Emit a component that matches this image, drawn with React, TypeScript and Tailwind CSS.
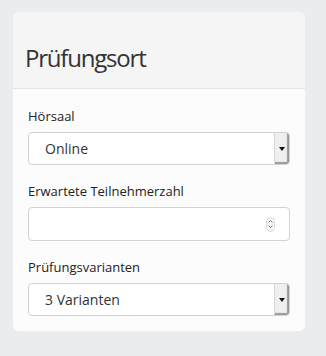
function SelectBox({ value }: { value: string }) {
  return (
    <div className="flex h-[33px] items-stretch overflow-hidden rounded-[4px] border border-[#d2d2d2] bg-white">
      <span className="flex flex-1 items-center pl-[16px] text-[14px] text-[#333]">{value}</span>
      <span className="flex w-[15px] items-center justify-center border-l border-[#d6d6d6] bg-[#efefef] shadow-[inset_-2px_-2px_1px_#9a9a9a]">
        <svg width="6" height="4" viewBox="0 0 6 4">
          <path d="M0 0h6L3 4z" fill="#111" />
        </svg>
      </span>
    </div>
  );
}

function NumberBox() {
  return (
    <div className="flex h-[34px] items-center justify-end rounded-[4px] border border-[#d2d2d2] bg-white pr-[14px]">
      <span className="flex h-[15px] w-[9px] flex-col items-center justify-center rounded-full border border-[#dcdcdc] bg-[#f7f7f7]">
        <svg width="5" height="10" viewBox="0 0 5 10">
          <path d="M0.5 3.5 2.5 1.5 4.5 3.5M0.5 6.5 2.5 8.5 4.5 6.5" fill="none" stroke="#777" strokeWidth="1" />
        </svg>
      </span>
    </div>
  );
}

export default function App() {
  return (
    <div className="min-h-[356px] bg-[#ebecf0] pl-[13px] pr-[21px] pt-[12px] font-['Open_Sans',sans-serif]">
      <div className="overflow-hidden rounded-[6px] bg-[#fcfcfc]">
        <div className="flex h-[77px] items-end border-b border-[#e3e3e3] bg-[#f5f5f5] px-[12px] pb-[18px]">
          <h1 className="text-[24px] leading-none tracking-[-1.2px] text-[#333]">Prüfungsort</h1>
        </div>
        <div className="flex flex-col px-[15px] pb-[15px] pt-[18px] text-[13px] text-[#222]">
          <label className="mb-[7px] leading-[18px]">Hörsaal</label>
          <SelectBox value="Online" />
          <label className="mb-[7px] mt-[17px] leading-[18px]">Erwartete Teilnehmerzahl</label>
          <NumberBox />
          <label className="mb-[7px] mt-[17px] leading-[18px]">Prüfungsvarianten</label>
          <SelectBox value="3 Varianten" />
        </div>
      </div>
    </div>
  );
}
